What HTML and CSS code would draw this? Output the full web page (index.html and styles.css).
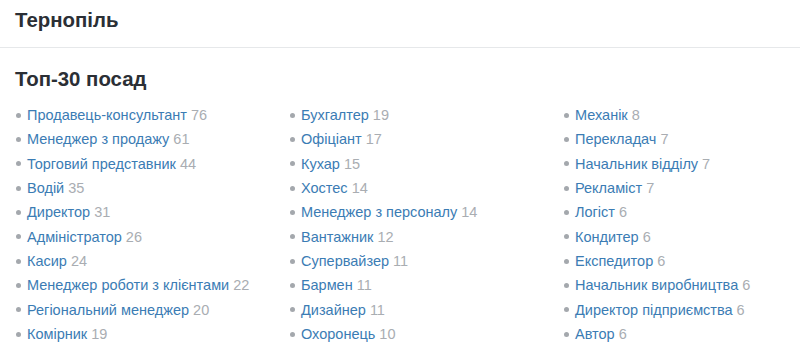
FILE: index.html
```html
<!DOCTYPE html>
<html lang="uk">
<head>
<meta charset="utf-8">
<link rel="stylesheet" href="styles.css">
</head>
<body>
<header class="city-header">
  <h1 class="city-title">Тернопіль</h1>
</header>
<section class="top-section">
  <h2 class="section-title">Топ-30 посад</h2>
  <div class="columns">
    <ul class="job-list">
      <li><a href="#">Продавець-консультант</a> <span class="count">76</span></li>
      <li><a href="#">Менеджер з продажу</a> <span class="count">61</span></li>
      <li><a href="#">Торговий представник</a> <span class="count">44</span></li>
      <li><a href="#">Водій</a> <span class="count">35</span></li>
      <li><a href="#">Директор</a> <span class="count">31</span></li>
      <li><a href="#">Адміністратор</a> <span class="count">26</span></li>
      <li><a href="#">Касир</a> <span class="count">24</span></li>
      <li><a href="#">Менеджер роботи з клієнтами</a> <span class="count">22</span></li>
      <li><a href="#">Регіональний менеджер</a> <span class="count">20</span></li>
      <li><a href="#">Комірник</a> <span class="count">19</span></li>
    </ul>
    <ul class="job-list">
      <li><a href="#">Бухгалтер</a> <span class="count">19</span></li>
      <li><a href="#">Офіціант</a> <span class="count">17</span></li>
      <li><a href="#">Кухар</a> <span class="count">15</span></li>
      <li><a href="#">Хостес</a> <span class="count">14</span></li>
      <li><a href="#">Менеджер з персоналу</a> <span class="count">14</span></li>
      <li><a href="#">Вантажник</a> <span class="count">12</span></li>
      <li><a href="#">Супервайзер</a> <span class="count">11</span></li>
      <li><a href="#">Бармен</a> <span class="count">11</span></li>
      <li><a href="#">Дизайнер</a> <span class="count">11</span></li>
      <li><a href="#">Охоронець</a> <span class="count">10</span></li>
    </ul>
    <ul class="job-list">
      <li><a href="#">Механік</a> <span class="count">8</span></li>
      <li><a href="#">Перекладач</a> <span class="count">7</span></li>
      <li><a href="#">Начальник відділу</a> <span class="count">7</span></li>
      <li><a href="#">Рекламіст</a> <span class="count">7</span></li>
      <li><a href="#">Логіст</a> <span class="count">6</span></li>
      <li><a href="#">Кондитер</a> <span class="count">6</span></li>
      <li><a href="#">Експедитор</a> <span class="count">6</span></li>
      <li><a href="#">Начальник виробництва</a> <span class="count">6</span></li>
      <li><a href="#">Директор підприємства</a> <span class="count">6</span></li>
      <li><a href="#">Автор</a> <span class="count">6</span></li>
    </ul>
  </div>
</section>
</body>
</html>
```
FILE: styles.css
```css
* { box-sizing: border-box; }
html, body {
  margin: 0;
  padding: 0;
  background: #ffffff;
  font-family: "Liberation Sans", Arial, sans-serif;
  overflow: hidden;
}
.city-header {
  padding: 9px 15px 15px;
  border-bottom: 1px solid #e6e8ea;
}
.city-title {
  margin: 0;
  font-size: 20.4px;
  line-height: 23px;
  font-weight: bold;
  color: #2b2f35;
}
.top-section {
  padding: 20px 15px 0;
}
.section-title {
  margin: 0 0 12px;
  font-size: 20.4px;
  line-height: 23px;
  font-weight: bold;
  color: #2b2f35;
}
.columns {
  display: grid;
  grid-template-columns: repeat(3, 274px);
}
.job-list {
  list-style: none;
  margin: 0;
  padding: 0;
}
.job-list li {
  display: flex;
  align-items: center;
  gap: 4px;
  font-size: 14.5px;
  line-height: 24.33px;
  white-space: nowrap;
}
.job-list li::before {
  content: "";
  width: 5px;
  height: 5px;
  border-radius: 50%;
  background: #a4a8ad;
  margin: 0 2px 0 1px;
  flex: none;
}
.job-list a {
  color: #3b7cb4;
  text-decoration: none;
}
.count {
  color: #a9adb2;
}
```
